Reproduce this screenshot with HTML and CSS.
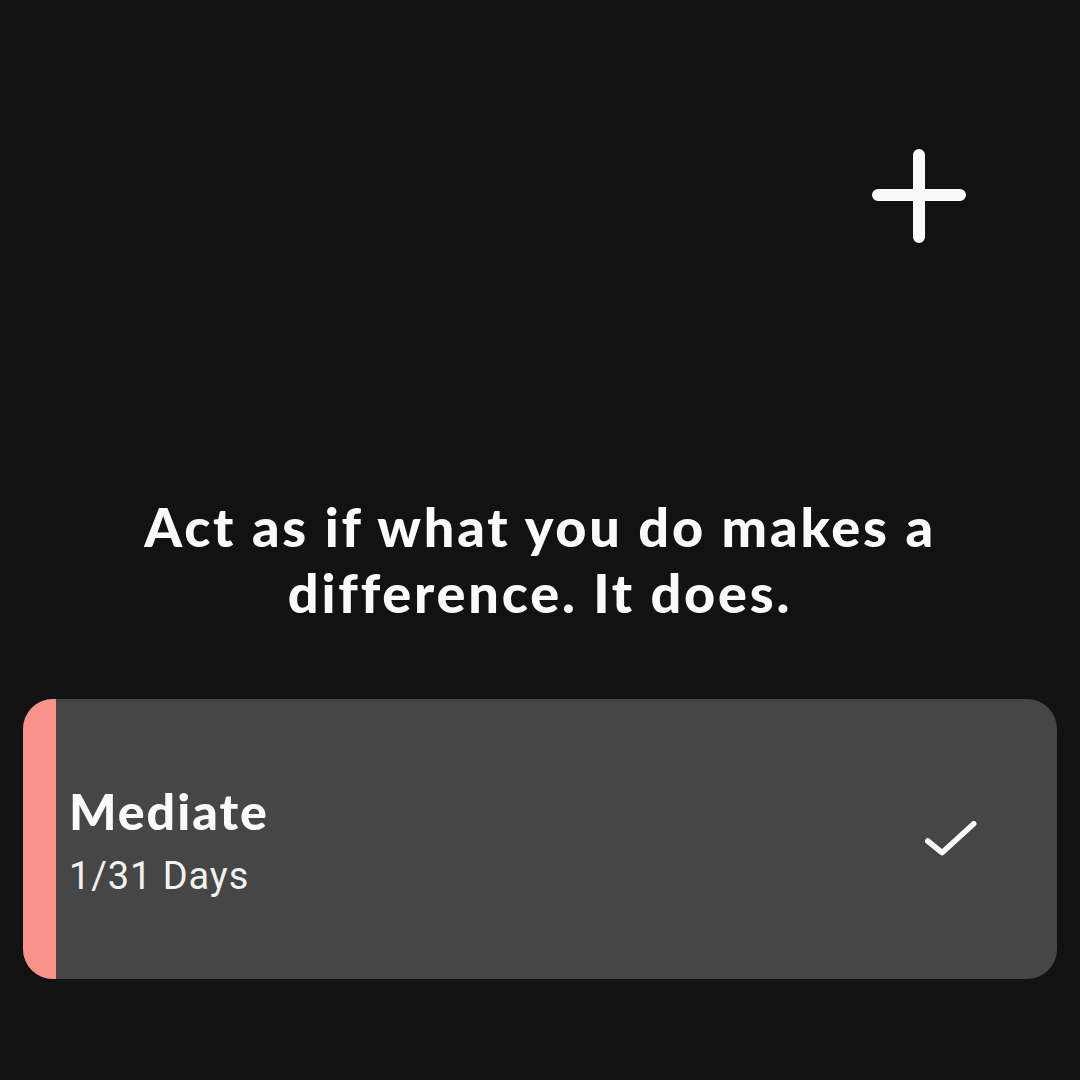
FILE: index.html
```html
<!DOCTYPE html>
<html>
<head>
<meta charset="utf-8">
<link rel="stylesheet" href="styles.css">
</head>
<body>
<div class="screen">
  <header class="topbar">
    <button class="add-btn" aria-label="Add">
      <svg width="104" height="104" viewBox="0 0 104 104">
        <path d="M52 12 V94 M11 52 H93" stroke="#fafafa" stroke-width="12" stroke-linecap="round" fill="none"/>
      </svg>
    </button>
  </header>
  <p class="quote">Act as if what you do makes a difference. It does.</p>
  <div class="habit-card">
    <div class="stripe"></div>
    <div class="habit-info">
      <div class="habit-name">Mediate</div>
      <div class="habit-progress">1/31 Days</div>
    </div>
    <svg class="check" width="60" height="50" viewBox="0 0 60 50">
      <path d="M6.7 20 L21 31.7 L52.7 2.7" stroke="#fafafa" stroke-width="5.5" stroke-linecap="round" stroke-linejoin="round" fill="none"/>
    </svg>
  </div>
</div>
</body>
</html>
```
FILE: styles.css
```css
html, body {
  margin: 0;
  padding: 0;
  background: #121212;
  height: 100%;
}
.screen {
  display: flex;
  flex-direction: column;
  width: 1080px;
  height: 1080px;
  box-sizing: border-box;
}
.topbar {
  display: flex;
  justify-content: flex-end;
  padding: 143px 109px 0 0;
}
.add-btn {
  background: none;
  border: 0;
  padding: 0;
  width: 104px;
  height: 104px;
  display: block;
}
.add-btn svg { display: block; }
.quote {
  margin: 247px 0 0 0;
  font-family: "Lato", "Liberation Sans", sans-serif;
  font-weight: 900;
  font-size: 54px;
  line-height: 66px;
  letter-spacing: 2.8px;
  color: #fafafa;
  text-align: center;
  padding: 0 130px;
}
.habit-card {
  margin: 73px 23px 0 23px;
  height: 280px;
  background: #464646;
  border-radius: 30px;
  overflow: hidden;
  display: flex;
  align-items: center;
}
.stripe {
  width: 33px;
  align-self: stretch;
  background: #f8928a;
}
.habit-info {
  flex: 1;
  padding-left: 13px;
  padding-top: 6px;
  display: flex;
  flex-direction: column;
}
.habit-name {
  font-family: "Lato", "Liberation Sans", sans-serif;
  font-weight: 900;
  font-size: 50px;
  line-height: 56px;
  letter-spacing: 2px;
  color: #fafafa;
}
.habit-progress {
  margin-top: 12px;
  font-family: "Roboto", "Liberation Sans", sans-serif;
  font-weight: 400;
  font-size: 38px;
  line-height: 50px;
  color: #f2f2f2;
  letter-spacing: 0.9px;
}
.check {
  display: block;
  margin-right: 76px;
  margin-top: 14px;
}
```
